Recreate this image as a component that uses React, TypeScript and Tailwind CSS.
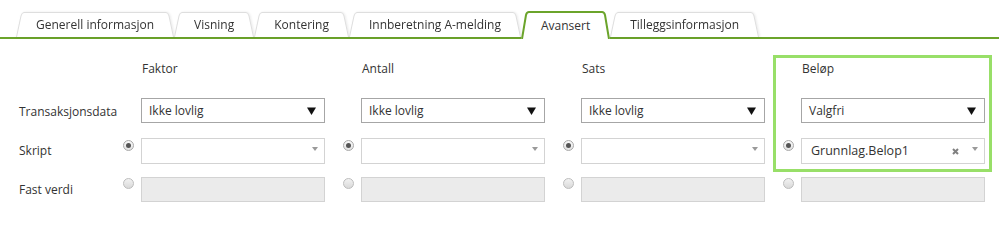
import React from 'react';

const tabs = ['Generell informasjon', 'Visning', 'Kontering', 'Innberetning A-melding', 'Avansert', 'Tilleggsinformasjon'];

const columns = [
  { title: 'Faktor', mode: 'Ikke lovlig', script: '' },
  { title: 'Antall', mode: 'Ikke lovlig', script: '' },
  { title: 'Sats', mode: 'Ikke lovlig', script: '' },
  { title: 'Beløp', mode: 'Valgfri', script: 'Grunnlag.Belop1' },
];

const Tab: React.FC<{ label: string; active?: boolean }> = ({ label, active }) => {
  const h = active ? 28 : 25;
  const stroke = active ? '#6ba42b' : '#dedede';
  const sw = active ? 2 : 1;
  const y = sw / 2;
  return (
    <div className={active ? 'flex h-[28px] -mb-[2px] relative z-10' : 'flex h-[25px] drop-shadow-[1px_0_1px_rgba(0,0,0,0.08)]'}>
      <svg width="8" height={h} className="block shrink-0">
        <path d={`M0 ${h} L5 4 Q5.8 ${y} 8 ${y} L8 ${h} Z`} fill="white" />
        <path d={`M${y} ${h} L5 4 Q5.8 ${y} 8 ${y}`} fill="none" stroke={stroke} strokeWidth={sw} />
      </svg>
      <div
        className={
          active
            ? 'bg-white px-[12px] flex items-center text-[12px] text-[#333] border-t-2 border-[#6ba42b]'
            : 'bg-white px-[12px] flex items-center text-[12px] text-[#333] border-t border-[#dedede]'
        }
      >
        {label}
      </div>
      <svg width="8" height={h} className="block shrink-0">
        <path d={`M0 ${y} Q2.2 ${y} 3 4 L8 ${h} L0 ${h} Z`} fill="white" />
        <path d={`M0 ${y} Q2.2 ${y} 3 4 L${8 - y} ${h}`} fill="none" stroke={stroke} strokeWidth={sw} />
      </svg>
    </div>
  );
};

const Radio: React.FC<{ checked?: boolean }> = ({ checked }) => (
  <span
    className={
      checked
        ? 'w-[11px] h-[11px] rounded-full border border-[#a9a9a9] bg-linear-to-b from-[#fafafa] to-[#e2e2e2] flex items-center justify-center'
        : 'w-[11px] h-[11px] rounded-full border border-[#bdbdbd] bg-linear-to-b from-[#f2f2f2] to-[#d9d9d9] flex items-center justify-center'
    }
  >
    {checked && <span className="w-[5px] h-[5px] rounded-full bg-[#555]" />}
  </span>
);

const BigCaret = () => (
  <svg width="9" height="8" viewBox="0 0 9 8">
    <path d="M0 0.5 H9 L4.5 8 Z" fill="#111" />
  </svg>
);

const SmallCaret = () => (
  <svg width="6" height="4" viewBox="0 0 6 4">
    <path d="M0 0 H6 L3 4 Z" fill="#9a9a9a" />
  </svg>
);

const ClearIcon = () => (
  <svg width="7" height="7" viewBox="0 0 7 7">
    <path d="M1 1 L6 6 M6 1 L1 6" stroke="#808080" strokeWidth="2" />
  </svg>
);

export default function App() {
  return (
    <div className="relative w-[999px] h-[216px] overflow-hidden bg-white font-['Open_Sans',sans-serif] text-[12px] text-[#333]">
      {/* Tabs */}
      <div className="pt-[11px]">
        <div className="flex items-end pl-[16px] border-b-2 border-[#6ba42b]">
          {tabs.map((t) => (
            <Tab key={t} label={t} active={t === 'Avansert'} />
          ))}
        </div>
      </div>

      {/* Header row */}
      <div className="flex h-[26px] items-center mt-[17px]">
        <div className="w-[117px]" />
        {columns.map((c) => (
          <div key={c.title} className="w-[220px] pl-[25px]">
            {c.title}
          </div>
        ))}
      </div>

      {/* Transaksjonsdata */}
      <div className="flex mt-[16px]">
        <div className="w-[117px] pl-[19px] pt-[5px]">Transaksjonsdata</div>
        {columns.map((c) => (
          <div key={c.title} className="w-[220px] flex">
            <div className="w-[24px]" />
            <div className="w-[184px] h-[25px] border border-[#a6a6a6] bg-white flex items-center justify-between pl-[7px] pr-[8px]">
              <span>{c.mode}</span>
              <BigCaret />
            </div>
          </div>
        ))}
      </div>

      {/* Skript */}
      <div className="flex mt-[15px]">
        <div className="w-[117px] pl-[19px] flex items-center">Skript</div>
        {columns.map((c) => (
          <div key={c.title} className="w-[220px] flex">
            <div className="w-[24px] pl-[6px] pt-[2px]">
              <Radio checked />
            </div>
            <div className="w-[184px] h-[26px] border border-[#d3d3d3] bg-white flex items-center pl-[9px] pr-[6px]">
              <span className="flex-1 text-[12.5px]">{c.script}</span>
              {c.script && (
                <span className="mr-[13px] flex">
                  <ClearIcon />
                </span>
              )}
              <span className="flex -mt-[4px]">
                <SmallCaret />
              </span>
            </div>
          </div>
        ))}
      </div>

      {/* Fast verdi */}
      <div className="flex mt-[13px]">
        <div className="w-[117px] pl-[19px] flex items-center">Fast verdi</div>
        {columns.map((c) => (
          <div key={c.title} className="w-[220px] flex">
            <div className="w-[24px] pl-[6px] pt-[1px]">
              <Radio />
            </div>
            <div className="w-[184px] h-[25px] border border-[#d3d3d3] bg-[#ebebeb]" />
          </div>
        ))}
      </div>

      {/* Highlight around Beløp */}
      <div className="absolute left-[773px] top-[55px] w-[219px] h-[117px] border-[3px] border-[#98df68] pointer-events-none" />
    </div>
  );
}
